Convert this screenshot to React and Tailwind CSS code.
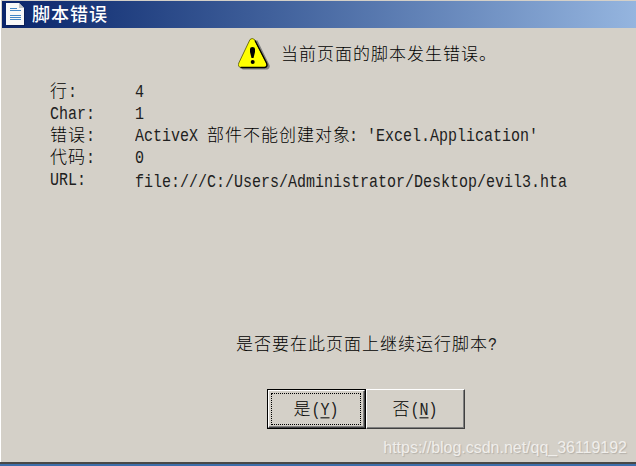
const latin =
  "inline-block origin-[50%_72%] scale-y-[1.2] whitespace-pre font-['Liberation_Mono',monospace] text-[15px] leading-[18px] tracking-normal text-[#202020]";

function L({ children, className = "" }) {
  return <span className={`${latin} ${className}`}>{children}</span>;
}

function DocumentIcon() {
  return (
    <svg className="h-6 w-5 shrink-0" viewBox="0 0 20 24">
      <path d="M1 1H14L19 6V23H1Z" fill="#07163f" opacity=".5" />
      <path d="M0 0H13L18 5V22H0Z" fill="#f8f8f8" />
      <path d="M13 0L18 5H13Z" fill="#bfc3c8" />
      <path d="M4 5.5H11M4 7.5H15M4 12.5H15M4 14.5H15M4 16.5H15" stroke="#4386c6" />
    </svg>
  );
}

function WarningIcon() {
  return (
    <svg className="h-8 w-8 shrink-0" viewBox="0 0 32 32">
      <path d="M17 2.5H19.5L31.5 27Q32.5 30 29.5 31.5H5Q3 31 4 29Z" fill="#808080" />
      <path d="M12 1.5Q14 -.5 16.5 1.5L28.5 25Q30 29 26.5 29.5H2.5Q-.5 28.5 .8 25Z" fill="#ff0" stroke="#505000" strokeWidth=".8" />
      <path d="M2.5 29.5H26.5Q30 29 28.5 25L17 2.5" fill="none" stroke="#000" strokeWidth="1.3" />
      <path d="M12 11Q12 9 14.5 9Q17 9 17 11V14L15.5 20H13.5L12 14Z" />
      <ellipse cx="14.7" cy="24" rx="2" ry="1.9" />
    </svg>
  );
}

const rows = [
  ["行", ":", "4"],
  ["", "Char:", "1"],
  ["错误", ":", null],
  ["代码", ":", "0"],
  ["", "URL:", "file:///C:/Users/Administrator/Desktop/evil3.hta"],
];

export default function App() {
  return (
    <div className="flex h-[466px] w-[636px] flex-col overflow-hidden bg-[#d4d0c8] font-['Noto_Sans_CJK_SC',sans-serif] text-[17px] leading-[22px] font-light tracking-[1px] text-black">
      <div className="flex h-[462px] flex-col border-l border-white pt-px">
        <header className="ml-px flex h-[27px] shrink-0 items-center bg-linear-to-r from-[#0a246a] to-[#95b5df] pl-1 text-[18px] font-medium text-white">
          <DocumentIcon />
          <h1 className="ml-[6px] pb-1">脚本错误</h1>
        </header>
        <div className="mt-[10px] flex h-8 shrink-0 items-center pl-[237px]">
          <WarningIcon />
          <p className="ml-[11px] pb-[3px]">当前页面的脚本发生错误。</p>
        </div>
        <dl className="mt-[9px] grid h-[112px] shrink-0 auto-rows-[22px] grid-cols-[85px_1fr] pl-[49px]">
          {rows.map(([cjk, label, value]) => (
            <div key={cjk + label} className="col-span-2 grid h-[22px] grid-cols-subgrid whitespace-nowrap">
              <dt>{cjk}<L>{label}</L></dt>
              <dd className={label === "URL:" ? "pt-[2px]" : ""}>
                {value ? <L>{value}</L> : <><L>{"ActiveX "}</L>部件不能创建对象<L className="-ml-[2px]">{": 'Excel.Application'"}</L></>}
              </dd>
            </div>
          ))}
        </dl>
        <p className="mt-[141px] h-[22px] shrink-0 pl-[235px]">是否要在此页面上继续运行脚本<L>?</L></p>
        <div className="mt-[35px] flex h-10 shrink-0 pl-[266px]">
          <button className="w-[99px] border border-black">
            <span className="flex h-full border border-t-white border-r-[#404040] border-b-[#404040] border-l-white">
              <span className="flex flex-1 border-r border-b border-[#808080] pt-[2px] pr-[2px] pb-px pl-[2px]">
                <span className="flex flex-1 items-center justify-center border border-dotted border-black">
                  <span>是<L>(<span className="underline underline-offset-2">Y</span>)</L></span>
                </span>
              </span>
            </span>
          </button>
          <button className="w-[99px] border border-t-white border-r-[#404040] border-b-[#404040] border-l-white">
            <span className="flex h-full items-center justify-center border-r border-b border-[#808080]">
              <span>否<L>(<span className="underline underline-offset-2">N</span>)</L></span>
            </span>
          </button>
        </div>
        <footer className="mt-[9px] shrink-0 pr-[9px] text-right font-['Liberation_Sans',sans-serif] text-[16px] leading-5 font-normal tracking-[-0.02px] text-[#f0eeeb] [text-shadow:1px_1px_1px_#b5b1aa]">
          https://blog.csdn.net/qq_36119192
        </footer>
      </div>
      <div className="h-1 shrink-0 border-t-2 border-[#494847] bg-[#3c6eab]" />
    </div>
  );
}
